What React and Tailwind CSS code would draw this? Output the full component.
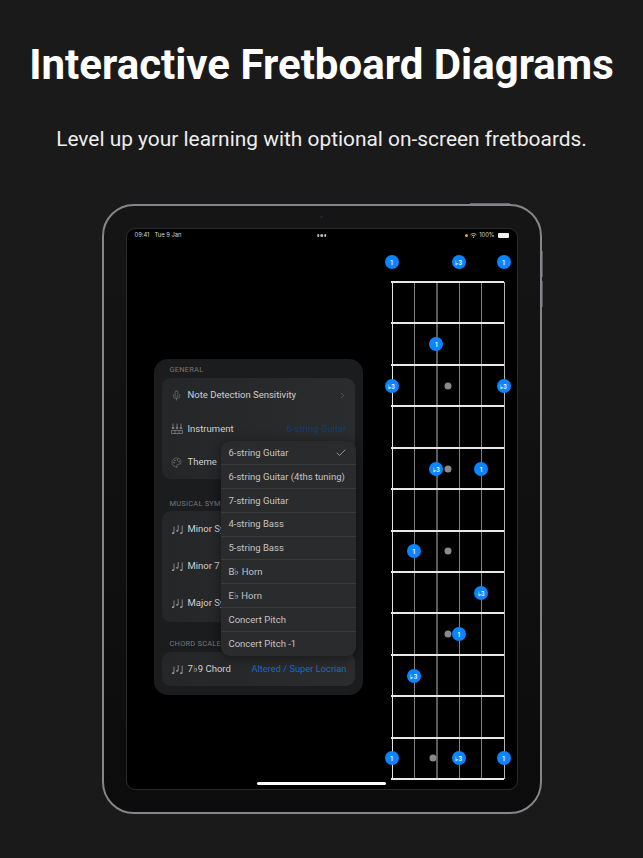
import { Check, ChevronRight, Mic, Palette } from 'lucide-react';

const instruments = [
  '6-string Guitar',
  '6-string Guitar (4ths tuning)',
  '7-string Guitar',
  '4-string Bass',
  '5-string Bass',
  'B♭ Horn',
  'E♭ Horn',
  'Concert Pitch',
  'Concert Pitch -1',
];

const strings = [
  { x: 0, className: 'w-px bg-[#e6e6e6]' },
  { x: 22.4, className: 'w-px bg-[#808080]' },
  { x: 44.8, className: 'w-[2px] bg-[#5c5c5c]' },
  { x: 67.2, className: 'w-px bg-[#808080]' },
  { x: 89.6, className: 'w-px bg-[#808080]' },
  { x: 112, className: 'w-px bg-[#b4b4b4]' },
];
const frets = Array.from({ length: 13 }, (_, i) => i * 41.42);

// x and y are measured from the top left corner of the fretboard
const notes = [
  { x: 0, y: -20, label: '1' },
  { x: 67.2, y: -20, label: '♭3' },
  { x: 112, y: -20, label: '1' },
  { x: 44.8, y: 62, label: '1' },
  { x: 0, y: 104, label: '♭3' },
  { x: 112, y: 104, label: '♭3' },
  { x: 44.8, y: 187, label: '♭3' },
  { x: 89.6, y: 187, label: '1' },
  { x: 22.4, y: 269, label: '1' },
  { x: 89.6, y: 311, label: '♭3' },
  { x: 67.2, y: 352, label: '1' },
  { x: 22.4, y: 394, label: '♭3' },
  { x: 0, y: 476, label: '1' },
  { x: 67.2, y: 476, label: '♭3' },
  { x: 112, y: 476, label: '1' },
];

const markers = [
  { x: 56, y: 104 },
  { x: 56, y: 187 },
  { x: 56, y: 269 },
  { x: 56, y: 352 },
  { x: 41, y: 476 },
];

function NotesIcon() {
  return (
    <svg width="12" height="11" viewBox="0 0 12 11" fill="none" stroke="#9a9a9c" strokeWidth="0.8">
      <path d="M3 2.500V9M7.200 1V6.500M11.200 1.500V9" />
      <ellipse cx="2" cy="9.200" rx="1.200" ry="0.900" fill="#9a9a9c" stroke="none" />
      <ellipse cx="6.200" cy="6.800" rx="1.200" ry="0.900" fill="#9a9a9c" stroke="none" />
      <ellipse cx="10.200" cy="9.200" rx="1.200" ry="0.900" fill="#9a9a9c" stroke="none" />
    </svg>
  );
}

function TunersIcon() {
  return (
    <svg width="12" height="11" viewBox="0 0 12 11" fill="none" stroke="#8a8a8c" strokeWidth="0.8">
      <path d="M2 0.500V6M6 0.500V6M10 0.500V6" />
      <path d="M0.800 5H3.200M4.800 5H7.200M8.800 5H11.200" strokeWidth="1.600" />
      <path d="M0.500 7.500H11.500V10.500H0.500ZM4 7.500V10.500M8 7.500V10.500" strokeWidth="0.700" />
    </svg>
  );
}

function SettingRow({ icon, label, value, valueClass, chevron }) {
  return (
    <div className="flex h-[33.5px] items-center pt-[1px] pr-[8px] pl-[9px]">
      <div className="flex w-[17px] shrink-0 justify-start">{icon}</div>
      <span className="whitespace-nowrap">{label}</span>
      {value && <span className={`ml-auto whitespace-nowrap ${valueClass}`}>{value}</span>}
      {chevron && <ChevronRight className="ml-auto text-[#77777a]" size={9} strokeWidth={1.5} />}
    </div>
  );
}

function SymbolRow({ label }) {
  return (
    <div className="flex h-[37px] items-center pt-[1px] pl-[9px]">
      <div className="w-[17px] shrink-0"><NotesIcon /></div>
      <span className="whitespace-nowrap">{label}</span>
    </div>
  );
}

function SectionLabel({ children, className }) {
  return <div className={`pl-[8px] text-[7.5px] tracking-[0.2px] whitespace-nowrap text-[#77777a] ${className}`}>{children}</div>;
}

function SettingsPanel() {
  return (
    <div className="relative h-[336px] w-[209px] shrink-0 rounded-[14px] bg-[#1b1c1d] px-[8px] pt-[7px] font-['Roboto',sans-serif] text-[9.500px] text-[#d0d0d2]">
      <SectionLabel className="h-[12px] leading-[8px]">GENERAL</SectionLabel>
      <div className="rounded-[9px] bg-gradient-to-r from-[#252627] to-[#2b2c2d]">
        <SettingRow icon={<Mic size={11} strokeWidth={1} color="#9a9a9c" />} label="Note Detection Sensitivity" chevron />
        <SettingRow icon={<TunersIcon />} label="Instrument" value="6-string Guitar" valueClass="text-[#0d3f73]" />
        <SettingRow icon={<Palette size={11} strokeWidth={1} color="#9a9a9c" />} label="Theme" />
      </div>
      <SectionLabel className="mt-[21px] h-[11px] leading-[8px]">MUSICAL SYMBOLS</SectionLabel>
      <div className="rounded-[9px] bg-gradient-to-r from-[#252627] to-[#2b2c2d]">
        <SymbolRow label="Minor Symbol" />
        <SymbolRow label="Minor 7 Symbol" />
        <SymbolRow label="Major Symbol" />
      </div>
      <SectionLabel className="mt-[18.500px] h-[12px] leading-[8px]">CHORD SCALES</SectionLabel>
      <div className="rounded-[9px] bg-gradient-to-r from-[#252627] to-[#2b2c2d]">
        <SettingRow icon={<NotesIcon />} label="7♭9 Chord" value="Altered / Super Locrian" valueClass="text-[9.300px] text-[#0a6fd0]" />
      </div>

      {/* instrument dropdown */}
      <div className="absolute top-[82px] left-[67px] w-[135px] divide-y divide-[#3a3b3c] rounded-[9px] bg-[#2a2b2c] shadow-[0_2px_12px_rgba(0,0,0,0.45)]">
        {instruments.map((name, i) => (
          <div key={name} className="flex h-[23.900px] items-center justify-between pt-[1px] pr-[9px] pl-[8px] whitespace-nowrap text-[#c4c4c6]">
            {name}
            {i === 0 && <Check size={12} strokeWidth={1.200} color="#d8d8da" />}
          </div>
        ))}
      </div>
    </div>
  );
}

function Fretboard() {
  return (
    <div className="relative mt-[53px] h-[497px] w-[112px] shrink-0">
      {strings.map((s) => (
        <div key={s.x} className={`absolute top-0 h-full ${s.className}`} style={{ left: s.x }} />
      ))}
      {frets.map((y) => (
        <div key={y} className="absolute -left-px h-[2px] w-[113px] bg-[#e8e8e8]" style={{ top: y - 1 }} />
      ))}
      {markers.map((m) => (
        <div
          key={`${m.x}-${m.y}`}
          className="absolute h-[7px] w-[7px] -translate-x-1/2 -translate-y-1/2 rounded-full bg-[#8a8a8a]"
          style={{ left: m.x, top: m.y }}
        />
      ))}
      {notes.map((n) => (
        <div
          key={`${n.x}-${n.y}`}
          className="absolute flex h-[14px] w-[14px] -translate-x-1/2 -translate-y-1/2 items-center justify-center rounded-full bg-[#0a84ff] text-[6px] font-semibold text-white"
          style={{ left: n.x, top: n.y }}
        >
          {n.label}
        </div>
      ))}
    </div>
  );
}

function StatusBar() {
  return (
    <div className="absolute inset-x-0 top-0 flex h-[13px] items-center justify-between px-[8px] text-[5.800px] text-[#d8d8d8]">
      <div className="flex gap-[5px]">
        <span>09:41</span>
        <span>Tue 9 Jan</span>
      </div>
      <div className="absolute left-1/2 flex -translate-x-1/2 gap-[1px]">
        <span className="h-[2.500px] w-[2.500px] rounded-full bg-[#bbb]" />
        <span className="h-[2.500px] w-[2.500px] rounded-full bg-[#bbb]" />
        <span className="h-[2.500px] w-[2.500px] rounded-full bg-[#bbb]" />
      </div>
      <div className="flex items-center gap-[2px]">
        <span className="h-[3px] w-[3px] rounded-full bg-[#f59e0b]" />
        <svg width="7" height="5" viewBox="0 0 14 10" fill="none" stroke="#ddd" strokeWidth="1.600">
          <path d="M1 3.500C4.500 0.500 9.500 0.500 13 3.500M3.500 6C5.500 4.300 8.500 4.300 10.500 6" />
          <circle cx="7" cy="8.400" r="1.300" fill="#ddd" stroke="none" />
        </svg>
        <span>100%</span>
        <span className="ml-[1px] h-[5px] w-[11px] rounded-[1px] bg-[#eee]" />
      </div>
    </div>
  );
}

export default function App() {
  return (
    <div className="h-[858px] w-[643px] overflow-hidden bg-[#1a1a1a] font-['Inter',sans-serif]">
      <h1 className="pt-[39px] text-center font-['Roboto',sans-serif] text-[42px] leading-[52px] font-bold whitespace-nowrap text-white">
        Interactive Fretboard Diagrams
      </h1>
      <p className="mt-[34px] text-center font-['Roboto',sans-serif] text-[20.900px] leading-[28px] text-[#ededed]">
        Level up your learning with optional on-screen fretboards.
      </p>
      <div className="relative mx-auto mt-[51px] h-[610px] w-[440px] rounded-[32px] border-2 border-[#85858a] bg-gradient-to-b from-[#151515] to-[#0c0c0c] p-[23px]">
        {/* camera */}
        <div className="absolute top-[7px] left-1/2 flex h-[7px] w-[7px] -translate-x-1/2 items-center justify-center rounded-full bg-[#15151c]">
          <div className="h-[2px] w-[2px] rounded-full bg-[#1c2c55]" />
        </div>
        {/* hardware buttons */}
        <div className="absolute -top-[3px] right-[30px] h-[1px] w-[40px] bg-[#66666a]" />
        <div className="absolute top-[45px] -right-[3px] h-[26px] w-[1px] bg-[#55555a]" />
        <div className="absolute top-[75px] -right-[3px] h-[26px] w-[1px] bg-[#55555a]" />

        <div className="relative flex h-full items-start overflow-hidden rounded-[8px] bg-black pl-[27px] outline outline-[#2a2a2a]">
          <StatusBar />
          <div className="mt-[130px]">
            <SettingsPanel />
          </div>
          <div className="ml-[29px]">
            <Fretboard />
          </div>
          <div className="absolute bottom-[4px] left-[130px] h-[3px] w-[129px] rounded-full bg-white" />
        </div>
      </div>
    </div>
  );
}
